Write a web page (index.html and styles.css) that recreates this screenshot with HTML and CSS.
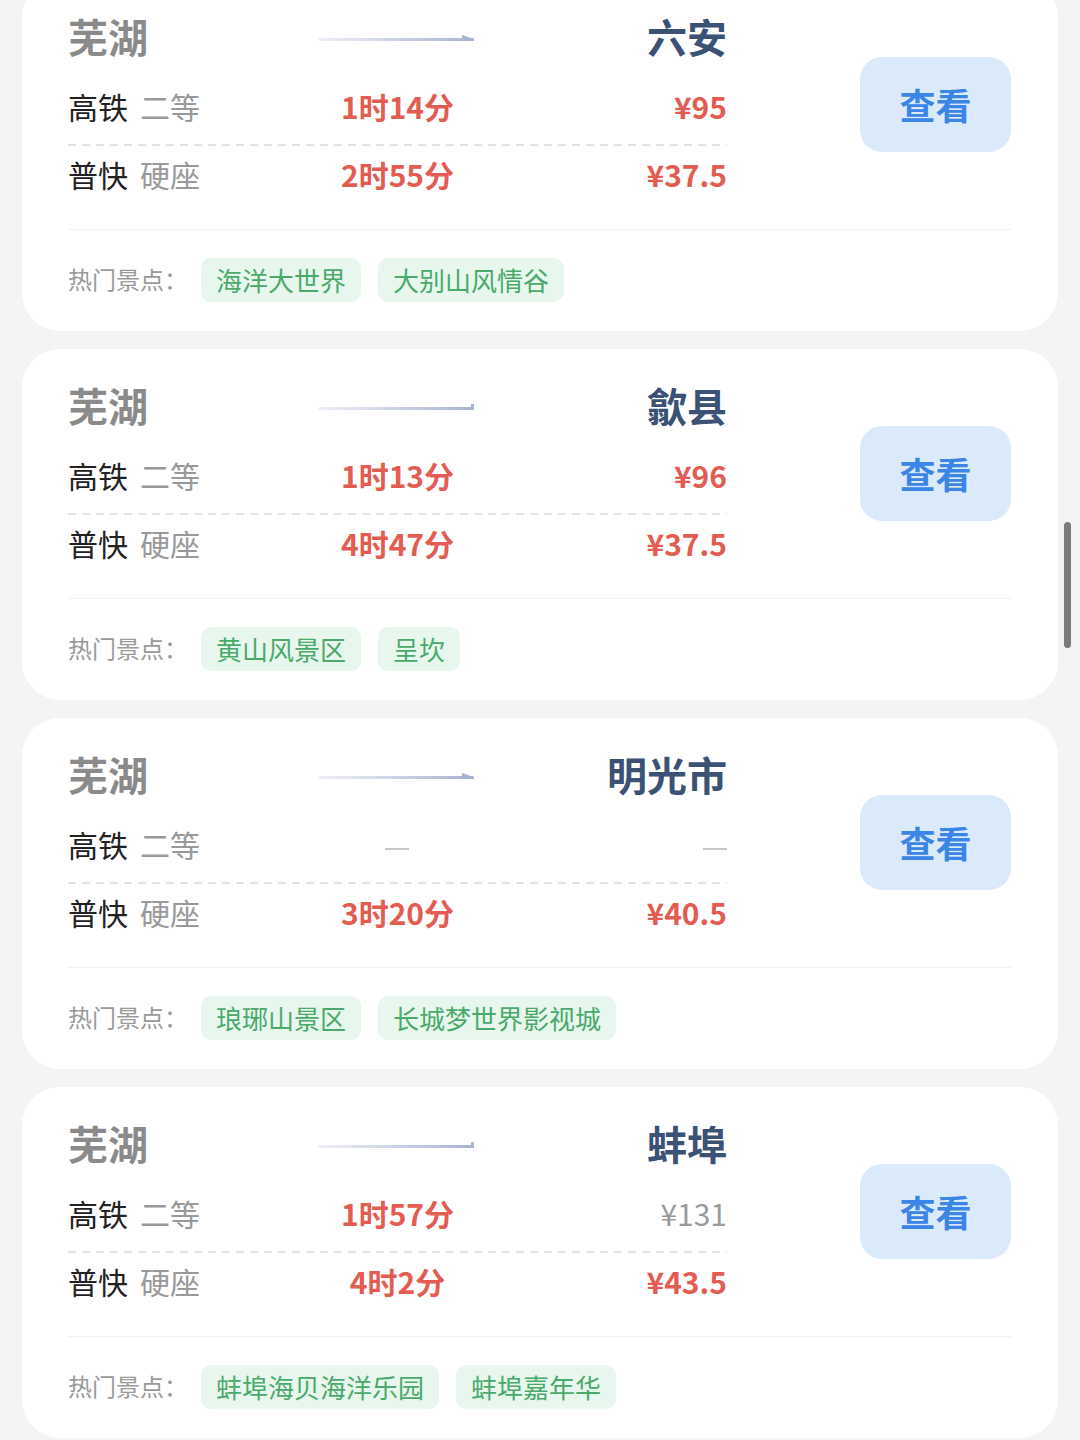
FILE: index.html
```html
<!DOCTYPE html>
<html lang="zh-CN">
<head>
  <meta charset="UTF-8">
  <meta name="viewport" content="width=device-width, initial-scale=1.0">
  <title>芜湖出发</title>
  <link rel="stylesheet" href="styles.css">
</head>
<body>
  <div class="list">

    <div class="card">
      <div class="top">
        <div class="info">
          <div class="head">
            <span class="from">芜湖</span>
            <span class="arrow"><svg width="158" height="12" viewBox="0 0 158 12"><defs><linearGradient id="g1" x1="0" x2="1"><stop offset="0" stop-color="#eef0f6"/><stop offset="1" stop-color="#a8b4d0"/></linearGradient></defs><rect x="0" y="6" width="156" height="3" rx="1.5" fill="url(#g1)"/><path d="M144 3 L156 7 L156 9 L144 9 Z" fill="#a8b4d0"/></svg></span>
            <span class="to">六安</span>
          </div>
          <div class="row">
            <span class="kind">高铁<em>二等</em></span>
            <span class="time">1时14分</span>
            <span class="price">¥95</span>
          </div>
          <div class="dash"></div>
          <div class="row">
            <span class="kind">普快<em>硬座</em></span>
            <span class="time">2时55分</span>
            <span class="price">¥37.5</span>
          </div>
        </div>
        <button class="view">查看</button>
      </div>
      <div class="spots">
        <span class="label">热门景点：</span>
        <span class="tag">海洋大世界</span>
        <span class="tag">大别山风情谷</span>
      </div>
    </div>

    <div class="card">
      <div class="top">
        <div class="info">
          <div class="head">
            <span class="from">芜湖</span>
            <span class="arrow"><svg width="158" height="12" viewBox="0 0 158 12"><defs><linearGradient id="g2" x1="0" x2="1"><stop offset="0" stop-color="#eef0f6"/><stop offset="1" stop-color="#a8b4d0"/></linearGradient></defs><rect x="0" y="6" width="156" height="3" rx="1.5" fill="url(#g2)"/><path d="M153 3 L156 3 L156 9 L153 9 Z" fill="#a8b4d0"/></svg></span>
            <span class="to">歙县</span>
          </div>
          <div class="row">
            <span class="kind">高铁<em>二等</em></span>
            <span class="time">1时13分</span>
            <span class="price">¥96</span>
          </div>
          <div class="dash"></div>
          <div class="row">
            <span class="kind">普快<em>硬座</em></span>
            <span class="time">4时47分</span>
            <span class="price">¥37.5</span>
          </div>
        </div>
        <button class="view">查看</button>
      </div>
      <div class="spots">
        <span class="label">热门景点：</span>
        <span class="tag">黄山风景区</span>
        <span class="tag">呈坎</span>
      </div>
    </div>

    <div class="card">
      <div class="top">
        <div class="info">
          <div class="head">
            <span class="from">芜湖</span>
            <span class="arrow"><svg width="158" height="12" viewBox="0 0 158 12"><defs><linearGradient id="g3" x1="0" x2="1"><stop offset="0" stop-color="#eef0f6"/><stop offset="1" stop-color="#a8b4d0"/></linearGradient></defs><rect x="0" y="6" width="156" height="3" rx="1.5" fill="url(#g3)"/><path d="M144 3 L156 7 L156 9 L144 9 Z" fill="#a8b4d0"/></svg></span>
            <span class="to">明光市</span>
          </div>
          <div class="row">
            <span class="kind">高铁<em>二等</em></span>
            <span class="time"><i class="none"></i></span>
            <span class="price"><i class="none"></i></span>
          </div>
          <div class="dash"></div>
          <div class="row">
            <span class="kind">普快<em>硬座</em></span>
            <span class="time">3时20分</span>
            <span class="price">¥40.5</span>
          </div>
        </div>
        <button class="view">查看</button>
      </div>
      <div class="spots">
        <span class="label">热门景点：</span>
        <span class="tag">琅琊山景区</span>
        <span class="tag">长城梦世界影视城</span>
      </div>
    </div>

    <div class="card">
      <div class="top">
        <div class="info">
          <div class="head">
            <span class="from">芜湖</span>
            <span class="arrow"><svg width="158" height="12" viewBox="0 0 158 12"><defs><linearGradient id="g4" x1="0" x2="1"><stop offset="0" stop-color="#eef0f6"/><stop offset="1" stop-color="#a8b4d0"/></linearGradient></defs><rect x="0" y="6" width="156" height="3" rx="1.5" fill="url(#g4)"/><path d="M153 3 L156 3 L156 9 L153 9 Z" fill="#a8b4d0"/></svg></span>
            <span class="to">蚌埠</span>
          </div>
          <div class="row">
            <span class="kind">高铁<em>二等</em></span>
            <span class="time">1时57分</span>
            <span class="price plain">¥131</span>
          </div>
          <div class="dash"></div>
          <div class="row">
            <span class="kind">普快<em>硬座</em></span>
            <span class="time">4时2分</span>
            <span class="price">¥43.5</span>
          </div>
        </div>
        <button class="view">查看</button>
      </div>
      <div class="spots">
        <span class="label">热门景点：</span>
        <span class="tag">蚌埠海贝海洋乐园</span>
        <span class="tag">蚌埠嘉年华</span>
      </div>
    </div>

  </div>
  <div class="scrollbar"></div>
</body>
</html>
```

FILE: styles.css
```css
body {
  margin: 0;
  background: #f4f4f4;
  font-family: "Noto Sans CJK SC", "Noto Sans", sans-serif;
  overflow: hidden;
}
.list {
  margin-top: -20px;
  padding: 0 22px;
  display: flex;
  flex-direction: column;
  gap: 18px;
}
.card {
  background: #fff;
  border-radius: 38px;
  padding: 27px 47px 29px 46px;
}
.top {
  display: flex;
  align-items: center;
  padding-bottom: 24px;
  border-bottom: 1px solid #f0f0f2;
}
.info {
  width: 659px;
}
.head, .row {
  display: grid;
  grid-template-columns: 1fr 1fr 1fr;
  align-items: center;
}
.head {
  height: 52px;
  font-size: 40px;
  font-weight: 700;
  margin-bottom: 16px;
}
.from {
  color: #8a8a8a;
}
.arrow {
  display: flex;
  justify-content: center;
  margin-top: 4px;
}
.arrow svg {
  display: block;
}
.to {
  text-align: right;
  color: #3b5275;
}
.row {
  height: 62px;
  font-size: 30px;
}
.kind {
  color: #222;
}
.kind em {
  font-style: normal;
  color: #999;
  margin-left: 12px;
}
.time {
  text-align: center;
  color: #e35c52;
  font-weight: 700;
}
.price {
  text-align: right;
  color: #e35c52;
  font-weight: 700;
}
.price.plain {
  color: #9a9a9a;
  font-weight: 400;
}
.none {
  display: inline-block;
  width: 24px;
  height: 2px;
  background: #c8c8c8;
  vertical-align: middle;
}
.dash {
  height: 2px;
  margin: 7px 0 -3px;
  background-image: linear-gradient(to right, #e0e3ea 60%, transparent 0);
  background-size: 14px 2px;
}
.view {
  margin-left: auto;
  margin-bottom: 4px;
  width: 151px;
  height: 95px;
  border: none;
  border-radius: 22px;
  background: #dbeafb;
  color: #3a85e6;
  font-family: inherit;
  font-size: 36px;
  font-weight: 700;
  cursor: pointer;
}
.spots {
  display: flex;
  align-items: center;
  gap: 17px;
  padding-top: 28px;
}
.label {
  font-size: 24px;
  color: #9a9a9a;
  margin-right: -4px;
  margin-top: -4px;
}
.tag {
  height: 44px;
  line-height: 44px;
  padding: 0 15px;
  border-radius: 10px;
  background: #e7f7ed;
  color: #4aa96b;
  font-size: 26px;
}
.scrollbar {
  position: fixed;
  right: 9px;
  top: 522px;
  width: 7px;
  height: 126px;
  border-radius: 4px;
  background: #7b7b7b;
}
```
